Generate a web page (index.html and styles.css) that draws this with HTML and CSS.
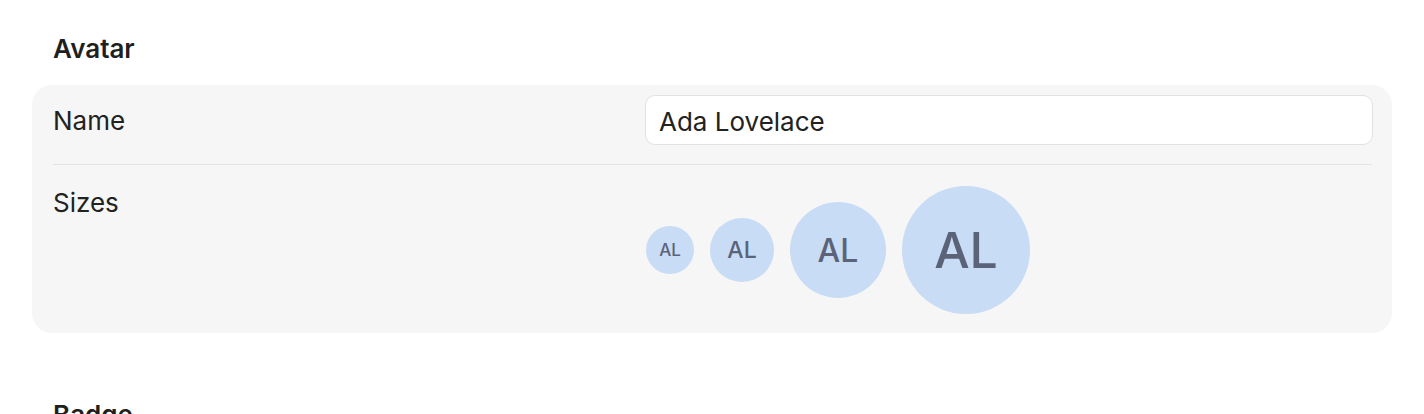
FILE: index.html
```html
<!DOCTYPE html>
<html lang="en">
<head>
  <meta charset="UTF-8" />
  <meta name="viewport" content="width=device-width, initial-scale=1" />
  <title>Components</title>
  <link rel="stylesheet" href="styles.css">
</head>
<body>

  <section class="demo">
    <h2>Avatar</h2>
    <div class="card">
      <div class="row row-name">
        <label class="label" for="name">Name</label>
        <input id="name" class="field" type="text" value="Ada Lovelace" />
      </div>
      <div class="row row-sizes">
        <div class="label">Sizes</div>
        <div class="avatars">
          <div class="avatar xs">AL</div>
          <div class="avatar sm">AL</div>
          <div class="avatar md">AL</div>
          <div class="avatar lg">AL</div>
        </div>
      </div>
    </div>
  </section>

  <section class="demo">
    <h2>Badge</h2>
  </section>

</body>
</html>
```

FILE: styles.css
```css
body {
  font-family: Inter, "Noto Sans", sans-serif;
  margin: 0;
  padding: 32px;
  background: #fff;
  color: #222;
}

.demo {
  margin-bottom: 65px;
}

h2 {
  font-size: 26px;
  line-height: 33px;
  font-weight: 600;
  margin: 0 0 20px;
  padding-left: 21px;
  color: #1f1f1f;
}

.card {
  background: #f6f6f6;
  border-radius: 20px;
  padding: 0 19px 0 21px;
}

.row {
  display: grid;
  grid-template-columns: 592px 1fr;
}

.row-name {
  align-items: center;
  padding: 10px 0 19px;
}

.row-sizes {
  border-top: 1px solid #e3e3e3;
  padding: 21px 0 19px;
  margin-right: 1px;
}

.label {
  font-size: 26px;
  line-height: 34px;
  color: #222;
}

.row-name .label {
  padding-top: 2px;
}

.field {
  font-family: inherit;
  font-size: 26px;
  color: #222;
  height: 50px;
  box-sizing: border-box;
  border: 1px solid #e2e2e2;
  border-radius: 10px;
  background: #fff;
  padding: 2px 13px 0;
  outline: none;
}

.avatars {
  display: flex;
  align-items: center;
  gap: 16px;
  padding-left: 1px;
}

.avatar {
  display: flex;
  justify-content: center;
  align-items: center;
  border-radius: 50%;
  background: #c8dcf6;
  color: #5a6377;
  font-weight: 500;
  flex-shrink: 0;
}

.avatar.xs {
  width: 48px;
  height: 48px;
  font-size: 17px;
}

.avatar.sm {
  width: 64px;
  height: 64px;
  font-size: 23px;
}

.avatar.md {
  width: 96px;
  height: 96px;
  font-size: 32px;
}

.avatar.lg {
  width: 128px;
  height: 128px;
  font-size: 50px;
}
```
